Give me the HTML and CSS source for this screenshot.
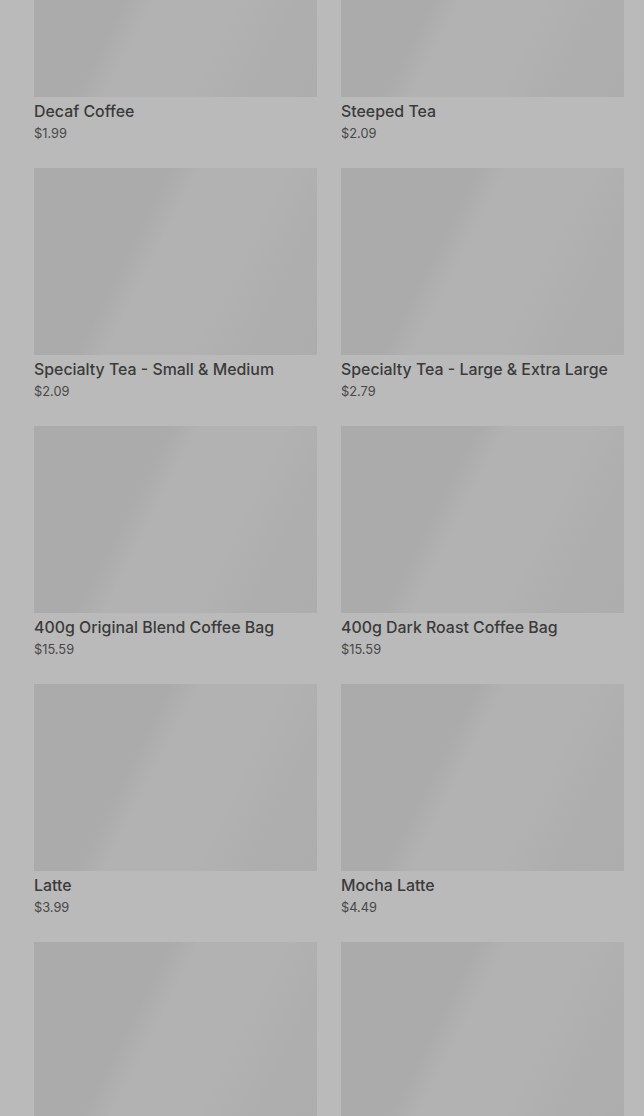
FILE: index.html
```html
<!DOCTYPE html>
<html lang="en">

<head>
    <meta charset="UTF-8">
    <meta name="viewport" content="width=device-width, initial-scale=1.0">
    <title>Menu</title>
    <link rel="stylesheet" href="styles.css">
</head>

<body>
    <div class="menu">
        <div class="item">
            <div class="thumb"></div>
            <h3>Decaf Coffee</h3>
            <p class="price">$1.99</p>
        </div>
        <div class="item">
            <div class="thumb"></div>
            <h3>Steeped Tea</h3>
            <p class="price">$2.09</p>
        </div>
        <div class="item">
            <div class="thumb"></div>
            <h3>Specialty Tea - Small &amp; Medium</h3>
            <p class="price">$2.09</p>
        </div>
        <div class="item">
            <div class="thumb"></div>
            <h3>Specialty Tea - Large &amp; Extra Large</h3>
            <p class="price">$2.79</p>
        </div>
        <div class="item">
            <div class="thumb"></div>
            <h3>400g Original Blend Coffee Bag</h3>
            <p class="price">$15.59</p>
        </div>
        <div class="item">
            <div class="thumb"></div>
            <h3>400g Dark Roast Coffee Bag</h3>
            <p class="price">$15.59</p>
        </div>
        <div class="item">
            <div class="thumb"></div>
            <h3>Latte</h3>
            <p class="price">$3.99</p>
        </div>
        <div class="item">
            <div class="thumb"></div>
            <h3>Mocha Latte</h3>
            <p class="price">$4.49</p>
        </div>
        <!-- still loading -->
        <div class="item">
            <div class="thumb"></div>
        </div>
        <div class="item">
            <div class="thumb"></div>
        </div>
    </div>
</body>

</html>
```

FILE: styles.css
```css
body {
    margin: 0;
    background-color: #bababa;
    font-family: Inter, Roboto, "Liberation Sans", sans-serif;
    color: #3b3b3b;
    overflow: hidden;
}

.menu {
    display: grid;
    grid-template-columns: 283px 283px;
    column-gap: 24px;
    row-gap: 24px;
    padding: 0 20px 0 34px;
    margin-top: -90px;
}

.thumb {
    height: 187px;
    background: linear-gradient(117deg, #ababab 0%, #ababab 36%, #b2b2b2 44%, #b2b2b2 66%, #aeaeae 82%, #adadad 100%);
}

h3 {
    margin: 3px 0 0;
    font-size: 15.9px;
    font-weight: 500;
    line-height: 24px;
}

.price {
    margin: 0;
    font-size: 12.8px;
    line-height: 20px;
    color: #484848;
}
```
